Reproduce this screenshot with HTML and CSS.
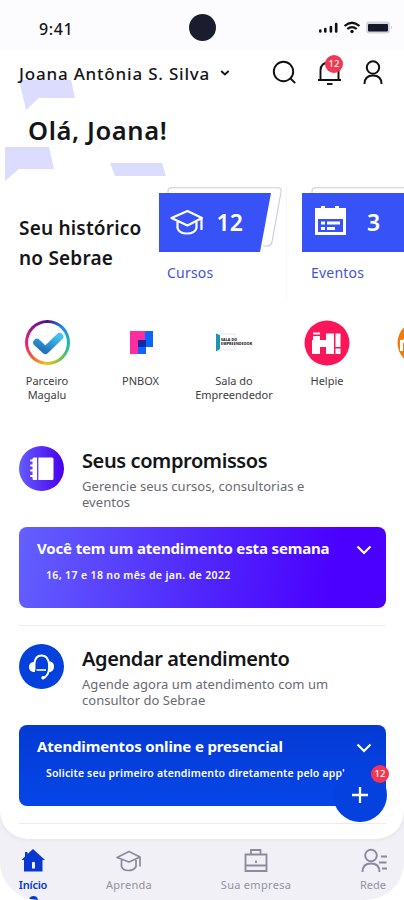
FILE: index.html
```html
<!DOCTYPE html>
<html lang="pt-BR">
<head>
<meta charset="utf-8">
<title>Sebrae</title>
<link rel="stylesheet" href="styles.css">
</head>
<body>
<div class="phone">
<main class="content">
  <div class="status">
    <span class="time">9:41</span>
    <span class="camera"></span>
    <svg class="indicators" width="80" height="20" viewBox="0 0 80 20">
      <g stroke="#111" stroke-width="2.6" stroke-linecap="round"><path d="M3.300 14.500v-1M8.300 14.500v-2.500M13.900 14.500v-4.500M19.200 14.500v-7.500"/></g>
      <g fill="none" stroke="#111" stroke-width="2.200"><path d="M27.500 9q7.500-6.500 15 0M30.300 12q4.700-3.800 9.400 0"/></g>
      <circle cx="35" cy="14.500" r="1.700" fill="#111"/>
      <rect x="49" y="4.500" width="24" height="12" rx="3" fill="#d6d6dc"/>
      <rect x="51" y="7" width="20" height="7.500" rx="1" fill="#17172b"/>
      <path d="M74 8.500q2 2 0 4z" fill="#c8c8ce"/>
    </svg>
  </div>

  <svg class="bubbles" width="170" height="112" viewBox="0 0 170 112">
    <path d="M19 10H71L75 28H39L26 40Z" fill="#dcdcff"/>
    <path d="M5 77H49L54 99H19L5 111Z" fill="#dcdcff"/>
    <path d="M110 93H162L166 106H115Z" fill="#dcdcff"/>
    <path d="M97 52H142L146 62H114L97 81Z" fill="#fbfbff"/>
  </svg>

  <header class="topbar">
    <span class="user">Joana Antônia S. Silva</span>
    <svg class="user-chevron" width="10" height="8" viewBox="0 0 10 8"><path d="M1.200 2l3.700 3.500L8.700 2" fill="none" stroke="#151515" stroke-width="1.900"/></svg>
    <nav class="actions">
      <svg width="26" height="28" viewBox="0 0 26 28" fill="none" stroke="#111" stroke-width="1.900"><circle cx="11.500" cy="12.500" r="9.700"/><path d="M18.500 19.500l4.700 4.700"/></svg>
      <span class="bell">
        <svg width="26" height="30" viewBox="0 0 26 30" fill="none" stroke="#111" stroke-width="1.900"><path d="M1 22H24M3.500 22V12.500Q3.500 4.500 12.500 4.500T21.500 12.500V22"/><path d="M10 26h5.500"/></svg>
        <b class="badge">12</b>
      </span>
      <svg width="22" height="28" viewBox="0 0 22 28" fill="none" stroke="#111" stroke-width="2"><circle cx="11" cy="8.500" r="6.200"/><path d="M2.500 25q0-8.500 8.500-8.500t8.500 8.500"/></svg>
    </nav>
  </header>

  <h1 class="hello">Olá, Joana!</h1>

  <section class="history">
    <h2 class="history-title">Seu histórico<br>no Sebrae</h2>
    <a class="stat">
      <svg width="126" height="66" viewBox="0 0 126 66">
        <path d="M10 8V4Q10 .7 13 .7H120Q124 .7 123 5L114 55Q113 59 109 59H105" fill="#fff" stroke="#c9c9e6" stroke-width="1.100"/>
        <path d="M1 6H113L102 65H1Z" fill="#3753f7"/>
        <g fill="none" stroke="#fff" stroke-width="2.200" stroke-linejoin="round"><path d="M13.500 31L29.500 24L44 31L29.500 38.500Z"/><path d="M19.500 35V41Q21 46.500 29 46.500T38.500 41V35M43.500 31.500V43"/></g>
        <text class="stat-number" x="58.500" y="44">12</text>
      </svg>
      <span class="stat-label cursos">Cursos</span>
    </a>
    <a class="stat">
      <svg width="126" height="66" viewBox="0 0 126 66">
        <path d="M10 8V4Q10 .7 13 .7H126V8" fill="#fff" stroke="#c9c9e6" stroke-width="1.100"/>
        <path d="M0 6H126V65H0Z" fill="#3753f7"/>
        <path d="M13 21h6v-2h4v2h10v-2h4v2h7v27H13Z" fill="#fff"/>
        <path d="M16 32h25v13H16Z" fill="#3753f7"/>
        <path d="M19 34.500h4v3h-4zM25 34.500h13v3H25zM19 40h4v3h-4zM25 40h8v3h-8z" fill="#fff"/>
        <text class="stat-number" x="65" y="44">3</text>
      </svg>
      <span class="stat-label eventos">Eventos</span>
    </a>
  </section>

  <section class="partners">
    <a class="partner magalu">
      <span class="ring"><svg width="39" height="39" viewBox="0 0 37 37"><defs><linearGradient id="tick" x1="1" y1="0" x2="0.300" y2="1"><stop offset="0" stop-color="#42c3ed"/><stop offset="1" stop-color="#2173bd"/></linearGradient></defs><path d="M8.500 18.500L16.500 26L30 13" fill="none" stroke="url(#tick)" stroke-width="7" stroke-linecap="round" stroke-linejoin="round"/></svg></span>
      <span>Parceiro<br>Magalu</span>
    </a>
    <a class="partner pnbox">
      <svg width="46" height="46" viewBox="0 0 46 46"><path d="M12 11h16v10h-8v13h-8z" fill="#ff2d9e"/><path d="M27 11h8v16h-7v7h-8V20h7z" fill="#0a66ff"/><path d="M20 20h8v7h-8z" fill="#1129a5"/></svg>
      <span>PNBOX</span>
    </a>
    <a class="partner sala">
      <svg width="46" height="46" viewBox="0 0 46 46"><path d="M9 14h15v16H9" fill="none" stroke="#e6e6e8"/><path d="M5 13.500L9 15V29l-4 2.500Z" fill="#1695b5"/><text class="micro" x="10" y="20.500" textLength="16">SALA DO</text><text class="micro" x="10" y="24.800" textLength="31">EMPREENDEDOR</text></svg>
      <span>Sala do<br>Empreendedor</span>
    </a>
    <a class="partner helpie">
      <svg width="46" height="46" viewBox="0 0 46 46"><circle cx="23" cy="23" r="22.500" fill="#fc1558"/><path d="M9 12.500h7v2H9zM9 16h7v4h6v-6.500h8V34h-8v-7h-6v7H8V20h1zM31.500 13.500h5V27h-5zM31.500 28.500h5V34h-5z" fill="#fff"/></svg>
      <span>Helpie</span>
    </a>
    <a class="partner mei">
      <svg width="46" height="46" viewBox="0 0 46 46"><circle cx="23" cy="23" r="22.500" fill="#f57a0b"/><path d="M4.500 31V20M4.500 23q3-5 6 0v8M10.500 23q3-5 6 0v8" fill="none" stroke="#fff" stroke-width="3"/></svg>
      <span>MEI</span>
    </a>
  </section>

  <section class="block">
    <div class="block-head">
      <svg width="45" height="45" viewBox="0 0 45 45"><defs><linearGradient id="disc"><stop offset="0" stop-color="#645cff"/><stop offset="1" stop-color="#4800ef"/></linearGradient></defs><circle cx="22.500" cy="22.500" r="22.500" fill="url(#disc)"/><rect x="13.500" y="11.500" width="21" height="22.500" rx="1.500" fill="#fff"/><path d="M18.700 11v24" stroke="#5339f8" stroke-width="1.300"/><path d="M12 14.500h3M12 19.500h3M12 24.500h3M12 30h3" stroke="#fff" stroke-width="2" stroke-linecap="round"/></svg>
      <div>
        <h2 class="t-compromissos">Seus compromissos</h2>
        <p class="p-compromissos">Gerencie seus cursos, consultorias e<br>eventos</p>
      </div>
    </div>
    <div class="card violet">
      <div class="card-row"><h3 class="c-semana">Você tem um atendimento esta semana</h3><svg width="16" height="12" viewBox="0 0 16 12"><path d="M1.500 2.500L8 9l6.500-6.500" fill="none" stroke="#fff" stroke-width="2.200"/></svg></div>
      <p class="d-semana">16, 17 e 18 no mês de jan. de 2022</p>
    </div>
  </section>

  <section class="block">
    <div class="block-head">
      <svg width="45" height="45" viewBox="0 0 45 45"><circle cx="22.500" cy="22.500" r="22.500" fill="#0440dc"/><path d="M15.500 26V20Q16 11.500 22.500 11.500T30 20V24Q30 32 23.500 34.500" fill="none" stroke="#fff" stroke-width="1.900"/><path d="M17.500 26h9.500" stroke="#fff" stroke-width="1.600"/><path d="M16 17.500V28h-2q-4-1-4-5t4-5zM30 17.500h1.500q3.500 1 3.500 5T31.500 28H30z" fill="#fff"/><circle cx="24" cy="33.800" r="1.700" fill="#fff"/></svg>
      <div>
        <h2 class="t-agendar">Agendar atendimento</h2>
        <p class="p-agendar">Agende agora um atendimento com um<br>consultor do Sebrae</p>
      </div>
    </div>
    <div class="card blue">
      <div class="card-row"><h3 class="c-online">Atendimentos online e presencial</h3><svg width="16" height="12" viewBox="0 0 16 12"><path d="M1.500 2.500L8 9l6.500-6.500" fill="none" stroke="#fff" stroke-width="2.200"/></svg></div>
      <p class="d-online">Solicite seu primeiro atendimento diretamente pelo app'</p>
      <button class="fab" aria-label="Adicionar"><svg width="18" height="18" viewBox="0 0 18 18"><path d="M9 1v16M1 9h16" stroke="#fff" stroke-width="2.300"/></svg><b class="badge">12</b></button>
    </div>
  </section>
</main>

<nav class="tabs">
  <a class="tab inicio active"><svg width="26" height="26" viewBox="0 0 26 26"><path d="M13 1L25 12H22.500V23.500H4V12H1.500L5 8.500V4H7.500V6Z" fill="#0738d2"/><path d="M12 14.500q1.500-1.500 3 0v6h-3z" fill="#f0f0f6"/></svg><span>Início</span></a>
  <a class="tab aprenda"><svg width="28" height="26" viewBox="0 0 28 26" fill="none" stroke="#8b8b9d" stroke-width="1.700" stroke-linejoin="round"><path d="M2 9.500L14 3.500L25 9L14 14ZM6.500 12V18.500Q8 22.500 13.500 22.500T21 18.500V12M25 9V18.500"/></svg><span>Aprenda</span></a>
  <a class="tab empresa"><svg width="26" height="26" viewBox="0 0 26 26" fill="none" stroke="#8b8b9d" stroke-width="1.800"><path d="M2.500 6.500H23.500V23H2.500ZM8 6V2H17.500V6M2.500 17.500H23.500"/><path d="M13 12.500v2.500"/></svg><span>Sua empresa</span></a>
  <a class="tab rede"><svg width="28" height="26" viewBox="0 0 28 26" fill="none" stroke="#8b8b9d" stroke-width="1.900"><circle cx="12" cy="7.500" r="5.800"/><path d="M3.500 24Q3.500 15.500 12 15.500T20.500 24M22 8.500h6M20 14.500h7.500M23 20.500h5"/></svg><span>Rede</span></a>
</nav>
</div>
</body>
</html>
```
FILE: styles.css
```css
* { box-sizing: border-box; }
body {
  margin: 0;
  background: #fff;
  color: #151518;
  font-family: "Noto Sans", "Open Sans", sans-serif;
  overflow: hidden;
}
h1, h2, h3, p { margin: 0; font-weight: 600; white-space: nowrap; }
svg { display: block; flex: none; }
.phone {
  width: 404px;
  height: 900px;
  display: flex;
  flex-direction: column;
  overflow: hidden;
  border-radius: 0 0 38px 38px;
  background: #f0f0f6;
}
.content {
  position: relative;
  height: 839px;
  overflow: hidden;
  background: #fff;
  border-radius: 0 0 28px 28px;
  box-shadow: 0 0 5px #dedee6;
}
.status {
  height: 50px;
  display: grid;
  grid-template-columns: 189px 28px 1fr;
  align-items: center;
  padding-top: 4px;
  background: #fcfcff;
}
.time { padding: 3px 0 0 39px; font-size: 16px; font-weight: 500; letter-spacing: .6px; }
.camera { width: 27px; height: 27px; border-radius: 50%; background: #1b1c2e; }
.indicators { margin-left: 100px; }
.bubbles { position: absolute; left: 0; top: 70px; }
.topbar {
  position: relative;
  height: 46px;
  display: flex;
  align-items: center;
  padding: 0 20px 0 19px;
}
.user { font-size: 17px; font-weight: 500; width: 200px; white-space: nowrap; letter-spacing: .8px; }
.user-chevron { margin-left: 1px; }
.actions { margin-left: auto; display: flex; align-items: center; gap: 19px; }
.bell { position: relative; }
.badge {
  position: absolute;
  right: -1px;
  top: -3px;
  width: 18px;
  height: 18px;
  border-radius: 50%;
  background: #f53652;
  color: #fff;
  font-size: 9.500px;
  font-weight: 500;
  line-height: 18px;
  text-align: center;
}
.bell .badge { right: 0; }
.hello { position: relative; height: 91px; padding: 15px 0 0 28px; font-size: 25.500px; line-height: 38px; letter-spacing: .6px; }
.history {
  height: 113px;
  display: grid;
  grid-template-columns: 139px 144px 126px;
  padding-left: 19px;
}
.history-title { padding-top: 26px; font-size: 19px; line-height: 30px; letter-spacing: .2px; }
.stat-number { fill: #fff; font-size: 23px; font-weight: 600; }
.stat { display: block; height: 113px; border-right: 1px solid #f7f7fa; width: 129px; }
.stat-label { display: block; padding: 9px 0 0 9px; color: #4354d4; font-size: 14px; line-height: 22px; letter-spacing: .2px; }
.partners { height: 146px; padding: 20px 0 0 2px; display: grid; grid-template-columns: 90px 97px 90px 96px 90px; }
.partner {
  display: flex;
  flex-direction: column;
  align-items: center;
  gap: 8px;
  font-size: 11px;
  line-height: 13.500px;
  text-align: center;
  color: #3d3d42;
}
.ring {
  width: 45px;
  height: 45px;
  margin-bottom: 1px;
  border: 3px solid transparent;
  border-radius: 50%;
  background: linear-gradient(#fff, #fff) padding-box, conic-gradient(#4b1681, #168ee6 45deg, #14b5bf 90deg, #65c34b 135deg, #f5bd19 185deg, #f85a2c 225deg, #ef187c 270deg, #8d1588 320deg, #4b1681) border-box;
}
.micro { font-size: 3.500px; font-weight: 800; fill: #111; }
.block { position: relative; height: 198px; padding: 0 18px 0 19px; }
.block::after { content: ""; display: block; margin-top: 17px; height: 1px; background: #ececf0; }
.block-head { height: 81px; display: flex; gap: 18px; }
.block-head h2 { font-size: 20px; line-height: 30px; letter-spacing: -.4px; }
.block-head p { font-size: 13px; line-height: 16px; font-weight: 400; color: #6a6a72; padding-top: 2px; letter-spacing: .04px; }
.card { position: relative; height: 81px; border-radius: 8px; color: #fff; padding: 11px 14px 0 18px; }
.violet { background: linear-gradient(100deg, #6360ff, #5027fc 50%, #4b00ff 85%); }
.blue { background: linear-gradient(#053ad4, #0546e8); }
.card-row { display: flex; justify-content: space-between; align-items: center; height: 20px; }
.card-row svg { margin-top: 3px; }
.card h3 { font-size: 15px; font-weight: 700; letter-spacing: -.15px; }
.card p { padding: 9px 0 0 9px; font-size: 10.500px; line-height: 16px; font-weight: 600; }
.card .d-semana { letter-spacing: .36px; }
.card .d-online { letter-spacing: .17px; }
.fab {
  position: absolute;
  left: 314px;
  top: 43px;
  width: 54px;
  height: 54px;
  border: 0;
  padding: 0;
  border-radius: 50%;
  background: #0541de;
  display: grid;
  place-items: center;
}
.fab .badge { right: -2px; top: -3px; font-family: "Noto Sans", sans-serif; }
.tabs { height: 61px; display: grid; grid-template-columns: 66px 126px 128px 106px; padding-top: 9px; }
.tab { position: relative; display: flex; flex-direction: column; align-items: center; color: #9292a0; font-size: 11px; line-height: 16px; white-space: nowrap; gap: 3px; }
.aprenda, .empresa { letter-spacing: .3px; }
.active { color: #0738d2; font-weight: 600; letter-spacing: -.2px; }
.active::after { content: ""; position: absolute; top: 48px; width: 9px; height: 9px; border-radius: 50%; background: #0738d2; }
```
